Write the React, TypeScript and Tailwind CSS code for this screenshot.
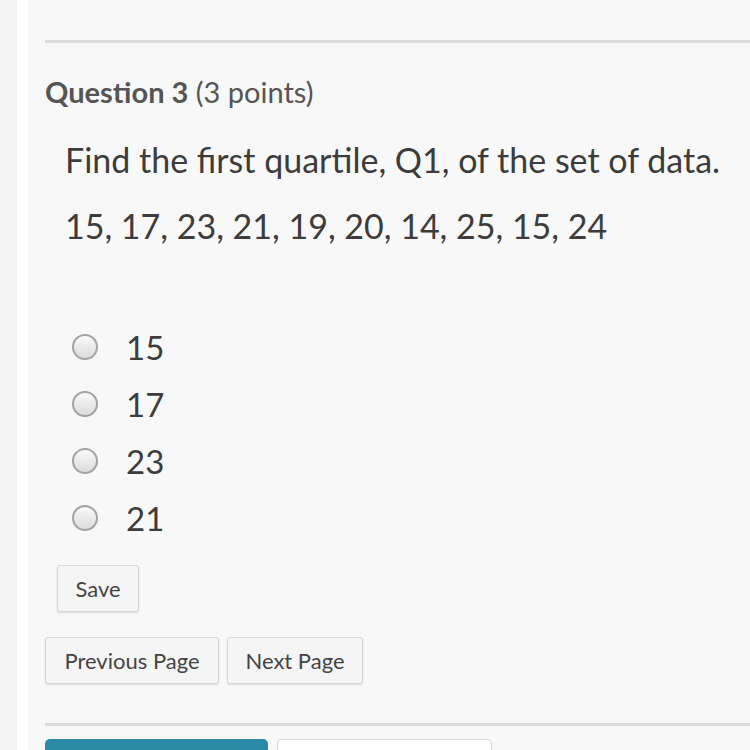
const options = ["15", "17", "23", "21"];

const btn =
  "h-[47px] rounded-[3px] border border-[#d8d8d8] bg-[#f5f5f5] text-[22px] text-[#444] shadow-[0_1px_2px_rgba(0,0,0,0.12)]";

export default function App() {
  return (
    <div className="flex h-[750px] w-[750px] overflow-hidden bg-[#f8f8f8] font-['Lato',sans-serif] text-[#3c3c3c]">
      <div className="w-[17px] shrink-0 bg-[#f3f3f3]" />
      <div className="w-[11px] shrink-0 bg-white" />
      <div className="flex flex-1 flex-col self-start pl-[17px]">
        <div className="mt-[40px] h-[3px] bg-[#dcdcdc]" />

        <h2 className="mt-[31px] text-[29px] leading-[35px] text-[#555]">
          <span className="font-bold">Question 3</span> (3 points)
        </h2>

        <div className="pl-[20px] text-[34px] leading-[41px]">
          <p className="mt-[30px]">Find the first quartile, Q1, of the set of data.</p>
          <p className="mt-[25px]">15, 17, 23, 21, 19, 20, 14, 25, 15, 24</p>
        </div>

        <div className="mt-[81px] flex flex-col gap-[17px] pl-[27px]">
          {options.map((o) => (
            <label key={o} className="flex h-[40px] items-center gap-[28px]">
              <span className="h-[26px] w-[26px] rounded-full border-2 border-[#a3a3a3] bg-gradient-to-b from-[#fafafa] to-[#dcdcdc]" />
              <span className="text-[33px] leading-[40px]">{o}</span>
            </label>
          ))}
        </div>

        <div className="mt-[27px] pl-[12px]">
          <button className={`${btn} w-[82px]`}>Save</button>
        </div>

        <div className="mt-[25px] flex gap-[8px]">
          <button className={`${btn} w-[174px]`}>Previous Page</button>
          <button className={`${btn} w-[136px]`}>Next Page</button>
        </div>

        <div className="mt-[39px] h-[3px] bg-[#dcdcdc]" />

        <div className="mt-[13px] flex gap-[9px]">
          <div className="h-[40px] w-[223px] rounded-t-[5px] bg-[#2b8aa5]" />
          <div className="h-[40px] w-[215px] rounded-t-[4px] border border-[#d6d6d6] bg-white" />
        </div>
      </div>
    </div>
  );
}
